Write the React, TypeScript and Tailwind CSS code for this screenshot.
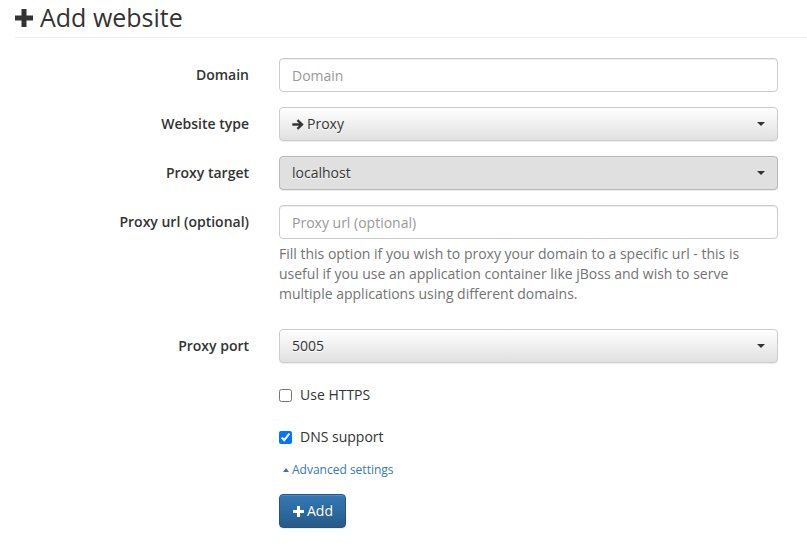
import { ReactNode } from "react";

function PlusIcon({ size, className }: { size: number; className?: string }) {
  return (
    <svg width={size} height={size} viewBox="0 0 18 18" className={className} fill="currentColor">
      <rect x="6.5" y="0" width="5" height="18" />
      <rect x="0" y="6.5" width="18" height="5" />
    </svg>
  );
}

function ArrowIcon() {
  return (
    <svg width="12" height="11" viewBox="0 0 12 11" className="inline-block mr-[3px] -mt-[2px] align-middle" fill="#333">
      <path d="M6.2 0.3 L11.7 5.5 L6.2 10.7 L4.6 9.1 L7.1 6.7 L0.3 6.7 L0.3 4.3 L7.1 4.3 L4.6 1.9 Z" />
    </svg>
  );
}

function Caret() {
  return (
    <span className="inline-block w-0 h-0 border-t-[4px] border-t-[#333] border-l-[4px] border-l-transparent border-r-[4px] border-r-transparent" />
  );
}

function Row({ label, children }: { label: string; children: ReactNode }) {
  return (
    <div className="flex mb-[15px]">
      <label className="w-[249px] shrink-0 text-right font-semibold pt-[7px] leading-5">{label}</label>
      <div className="ml-[30px] w-[499px]">{children}</div>
    </div>
  );
}

function TextInput({ placeholder }: { placeholder: string }) {
  return (
    <input
      placeholder={placeholder}
      className="block w-full h-[34px] px-3 text-[14px] leading-5 border border-[#ccc] rounded-[4px] bg-white text-[#555] placeholder:text-[#999] shadow-[inset_0_1px_1px_rgba(0,0,0,0.075)] outline-none"
    />
  );
}

function SelectButton({ children, hover }: { children: ReactNode; hover?: boolean }) {
  return (
    <button
      className={
        "flex items-center justify-between w-full h-[34px] pl-3 pr-[12px] text-[14px] leading-5 rounded-[4px] border text-[#333] [text-shadow:0_1px_0_#fff] shadow-[inset_0_1px_0_rgba(255,255,255,0.15),0_1px_1px_rgba(0,0,0,0.075)] " +
        (hover ? "bg-[#e0e0e0] border-[#b8b8b8]" : "bg-gradient-to-b from-white to-[#e0e0e0] border-[#ccc]")
      }
    >
      <span>{children}</span>
      <Caret />
    </button>
  );
}

export default function App() {
  return (
    <div className="w-[807px] h-[547px] bg-white text-[#333] text-[14px] overflow-hidden" style={{ fontFamily: '"Open Sans", "Liberation Sans", sans-serif' }}>
      <div className="ml-[15px] pt-[4px] pb-[7px] border-b border-[#eee]">
        <h1 className="flex items-center text-[25px] leading-[26px] font-normal">
          <PlusIcon size={18} className="mr-[7px] mt-[1px]" />
          Add website
        </h1>
      </div>

      <form className="mt-[20px]" onSubmit={(e) => e.preventDefault()}>
        <Row label="Domain">
          <TextInput placeholder="Domain" />
        </Row>

        <Row label="Website type">
          <SelectButton>
            <ArrowIcon />
            Proxy
          </SelectButton>
        </Row>

        <Row label="Proxy target">
          <SelectButton hover>localhost</SelectButton>
        </Row>

        <Row label="Proxy url (optional)">
          <TextInput placeholder="Proxy url (optional)" />
          <p className="mt-[5px] mb-[10px] leading-5 text-[#737373]">
            Fill this option if you wish to proxy your domain to a specific url - this is useful if you use an
            application container like jBoss and wish to serve multiple applications using different domains.
          </p>
        </Row>

        <Row label="Proxy port">
          <SelectButton>5005</SelectButton>
        </Row>

        <div className="ml-[279px]">
          <label className="flex items-center pt-[7px] leading-5">
            <input type="checkbox" className="w-[13px] h-[13px] m-0 mr-[8px]" />
            Use HTTPS
          </label>

          <label className="flex items-center mt-[22px] leading-5">
            <input type="checkbox" defaultChecked className="w-[13px] h-[13px] m-0 mr-[8px]" />
            DNS support
          </label>

          <a href="#" className="flex items-center mt-[14px] text-[12px] leading-[17px] text-[#337ab7]">
            <span className="inline-block w-0 h-0 ml-[4px] mr-[3px] border-b-[4px] border-b-[#337ab7] border-l-[3.5px] border-l-transparent border-r-[3.5px] border-r-transparent" />
            Advanced settings
          </a>

          <button
            type="submit"
            className="flex items-center mt-[16px] h-[34px] pl-[13px] pr-[12px] text-[14px] leading-5 text-white rounded-[4px] border border-[#245580] bg-gradient-to-b from-[#337ab7] to-[#265a88] [text-shadow:0_-1px_0_rgba(0,0,0,0.2)] shadow-[inset_0_1px_0_rgba(255,255,255,0.15),0_1px_1px_rgba(0,0,0,0.075)]"
          >
            <PlusIcon size={11} className="mr-[3px]" />
            Add
          </button>
        </div>
      </form>
    </div>
  );
}
